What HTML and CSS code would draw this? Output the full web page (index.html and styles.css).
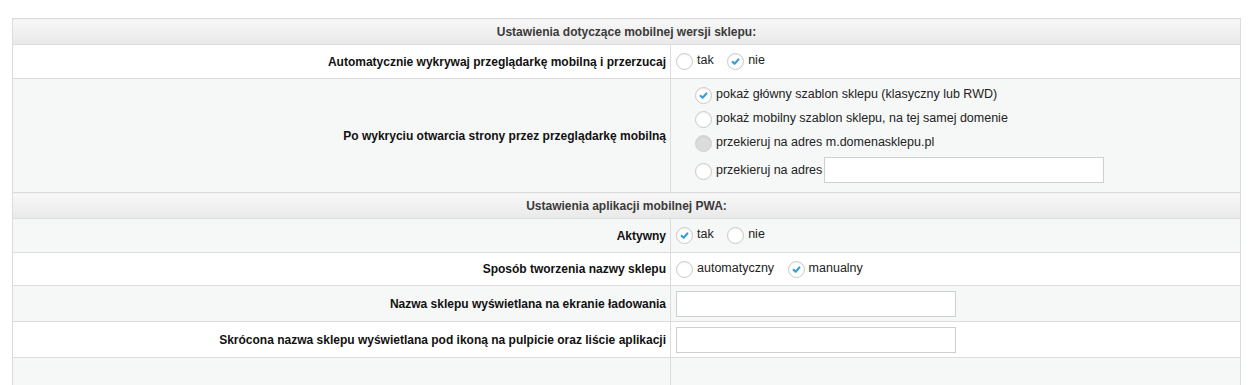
FILE: index.html
```html
<!DOCTYPE html>
<html lang="pl">
<head>
    <meta charset="UTF-8">
    <meta name="viewport" content="width=device-width, initial-scale=1.0">
    <title>Ustawienia mobilne</title>
    <link rel="stylesheet" href="styles.css">
</head>
<body>
    <div class="page">
        <table class="settings">
            <colgroup>
                <col class="col-label">
                <col>
            </colgroup>
            <!-- wersja mobilna -->
            <tr class="section">
                <th colspan="2">Ustawienia dotyczące mobilnej wersji sklepu:</th>
            </tr>
            <tr class="white h34">
                <td class="label">Automatycznie wykrywaj przeglądarkę mobilną i przerzucaj</td>
                <td class="field">
                    <label class="opt"><span class="radio"></span>tak</label>
                    <label class="opt"><span class="radio checked"><svg viewBox="0 0 17 17"><path d="M5.2 8.9 L7.5 11 L11.8 6.2"/></svg></span>nie</label>
                </td>
            </tr>
            <tr class="grey h114">
                <td class="label">Po wykryciu otwarcia strony przez przeglądarkę mobilną</td>
                <td class="field">
                    <div class="opt-list">
                        <label class="opt line"><span class="radio checked"><svg viewBox="0 0 17 17"><path d="M5.2 8.9 L7.5 11 L11.8 6.2"/></svg></span>pokaż główny szablon sklepu (klasyczny lub RWD)</label>
                        <label class="opt line"><span class="radio"></span>pokaż mobilny szablon sklepu, na tej samej domenie</label>
                        <label class="opt line"><span class="radio disabled"></span>przekieruj na adres m.domenasklepu.pl</label>
                        <label class="opt line last"><span class="radio"></span>przekieruj na adres <input type="text" class="text-input"></label>
                    </div>
                </td>
            </tr>
            <!-- PWA -->
            <tr class="section">
                <th colspan="2">Ustawienia aplikacji mobilnej PWA:</th>
            </tr>
            <tr class="grey h34">
                <td class="label">Aktywny</td>
                <td class="field">
                    <label class="opt"><span class="radio checked"><svg viewBox="0 0 17 17"><path d="M5.2 8.9 L7.5 11 L11.8 6.2"/></svg></span>tak</label>
                    <label class="opt"><span class="radio"></span>nie</label>
                </td>
            </tr>
            <tr class="white h33">
                <td class="label">Sposób tworzenia nazwy sklepu</td>
                <td class="field">
                    <label class="opt"><span class="radio"></span>automatyczny</label>
                    <label class="opt"><span class="radio checked"><svg viewBox="0 0 17 17"><path d="M5.2 8.9 L7.5 11 L11.8 6.2"/></svg></span>manualny</label>
                </td>
            </tr>
            <tr class="grey h36">
                <td class="label">Nazwa sklepu wyświetlana na ekranie ładowania</td>
                <td class="field"><input type="text" class="text-input"></td>
            </tr>
            <tr class="white h36">
                <td class="label">Skrócona nazwa sklepu wyświetlana pod ikoną na pulpicie oraz liście aplikacji</td>
                <td class="field"><input type="text" class="text-input"></td>
            </tr>
            <tr class="grey h40">
                <td class="label"></td>
                <td class="field"></td>
            </tr>
        </table>
    </div>
</body>
</html>
```

FILE: styles.css
```css
/* 基本 */
body {
    margin: 0;
    padding: 0;
    font-family: "Liberation Sans", Arial, sans-serif;
    font-size: 12px;
    color: #222;
    background-color: #fff;
}

.page {
    padding: 18px 0 0 12px;
}

/* tabela ustawien */
.settings {
    width: 1229px;
    border-collapse: collapse;
    table-layout: fixed;
    border: 1px solid #dcdcdc;
}

.col-label {
    width: 658px;
}

.settings td,
.settings th {
    border: 1px solid #dcdcdc;
    padding: 0;
    vertical-align: middle;
}

/* naglowki sekcji */
.section th {
    height: 25px;
    background: linear-gradient(#f8f8f8, #e9e9e9);
    color: #3a3a3a;
    font-weight: bold;
    text-align: center;
}

.white td {
    background-color: #fff;
}

.grey td {
    background-color: #f6f7f7;
}

.h33 td { height: 32px; }
.h34 td { height: 33px; }
.h36 td { height: 35px; }
.h40 td { height: 40px; }
.h114 td { height: 112px; }

.label {
    text-align: right;
    font-weight: bold;
    color: #111;
    padding-right: 4px !important;
}

.field {
    padding-left: 5px !important;
    font-size: 12.5px;
}

/* opcje radio */
.opt {
    display: inline-flex;
    align-items: center;
    margin-right: 10px;
    cursor: pointer;
}

.radio {
    width: 17px;
    height: 17px;
    box-sizing: border-box;
    border: 1px solid #c9c9c9;
    border-radius: 50%;
    background-color: #fff;
    margin-right: 4px;
    margin-top: 3px;
    box-shadow: inset 0 1px 2px rgba(0, 0, 0, 0.06);
    display: inline-block;
    flex: none;
}

.radio svg {
    display: block;
    width: 15px;
    height: 15px;
}

.radio svg path {
    fill: none;
    stroke: #3a9fd6;
    stroke-width: 2.4;
    stroke-linecap: round;
    stroke-linejoin: round;
}

.radio.disabled {
    background-color: #dcdcdc;
    border-color: #d2d2d2;
}

.opt-list {
    padding: 3px 0 6px 19px;
}

.opt.line {
    display: flex;
    height: 24px;
    margin-right: 0;
}

.opt.line.last {
    height: 32px;
}

/* pola tekstowe */
.text-input {
    width: 280px;
    height: 26px;
    box-sizing: border-box;
    border: 1px solid #cfcfcf;
    background-color: #fff;
    margin: 0;
    padding: 2px 4px;
    font-family: inherit;
    font-size: 12px;
}

.opt.line .text-input {
    margin-left: 2px;
}
```
